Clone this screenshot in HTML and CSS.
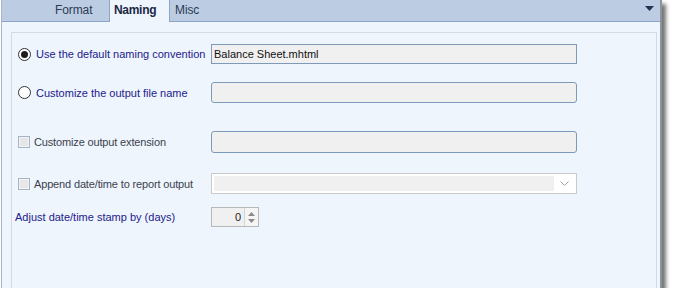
FILE: index.html
```html
<!DOCTYPE html>
<html>
<head>
	<title>Output Naming</title>
	<meta charset="utf-8">
	<link rel="stylesheet" href="styles.css">
</head>
<body>

	<div class="window">
		<div class="tabbar">
			<div class="tab">Format</div>
			<div class="tab tab-active">Naming</div>
			<div class="tab">Misc</div>
			<svg class="tab-menu" width="9" height="5" viewBox="0 0 9 5"><path d="M0 0H9L4.5 5Z" fill="#1f3355"/></svg>
		</div>

		<div class="content">
			<div class="group">

				<div class="row row-1">
					<label class="field-label">
						<span class="radio radio-on"></span>
						<span class="text-link">Use the default naming convention</span>
					</label>
					<div class="textbox">Balance Sheet.mhtml</div>
				</div>

				<div class="row row-2">
					<label class="field-label">
						<span class="radio"></span>
						<span class="text-link">Customize the output file name</span>
					</label>
					<div class="textbox rounded"></div>
				</div>

				<div class="row row-3">
					<label class="field-label">
						<span class="check"></span>
						<span class="text-muted">Customize output extension</span>
					</label>
					<div class="textbox rounded tall"></div>
				</div>

				<div class="row row-4">
					<label class="field-label">
						<span class="check"></span>
						<span class="text-muted">Append date/time to report output</span>
					</label>
					<div class="combo">
						<div class="combo-value"></div>
						<svg class="combo-arrow" width="9" height="5" viewBox="0 0 9 5"><path d="M0.5 0.5L4.5 4.5L8.5 0.5" fill="none" stroke="#a3a3a3"/></svg>
					</div>
				</div>

				<div class="row row-5">
					<label class="field-label plain">
						<span class="text-link">Adjust date/time stamp by (days)</span>
					</label>
					<div class="spinner">
						<span class="spinner-value">0</span>
						<span class="spinner-buttons">
							<svg width="7" height="4" viewBox="0 0 7 4"><path d="M0 4H7L3.5 0Z" fill="#8a8a8a"/></svg>
							<svg width="7" height="4" viewBox="0 0 7 4"><path d="M0 0H7L3.5 4Z" fill="#8a8a8a"/></svg>
						</span>
					</div>
				</div>

			</div>
		</div>
	</div>

</body>
</html>
```

FILE: styles.css
```css
*,
*:before,
*:after {
	box-sizing: border-box;
}

body {
	margin: 0;
	background-color: #ffffff;
	font-family: "Liberation Sans", Arial, sans-serif;
	font-size: 11px;
}

.window {
	width: 661px;
	height: 288px;
	margin-left: 1px;
	display: flex;
	flex-direction: column;
	border-left: 1px solid #a8b6c8;
	border-right: 2px solid #8d939b;
	background-color: #eef5fd;
	box-shadow: 4px 4px 4px rgba(0, 0, 0, 0.55);
}

/* Tabs */
.tabbar {
	position: relative;
	height: 22px;
	display: flex;
	align-items: stretch;
	padding-left: 53px;
	background-color: #bccde3;
	border-bottom: 1px solid #8ea6c6;
}

.tab {
	display: flex;
	align-items: center;
	width: 54px;
	padding-bottom: 1px;
	color: #2b3a55;
	font-size: 12px;
	letter-spacing: -0.1px;
}

.tab-active {
	width: 61px;
	margin-bottom: -1px;
	padding: 0 0 2px 4px;
	background-color: #eef5fd;
	border-left: 1px solid #8ea6c6;
	border-right: 1px solid #8ea6c6;
	color: #1b2845;
	font-weight: bold;
	letter-spacing: -0.3px;
}

.tab-active + .tab {
	width: 40px;
	padding-left: 5px;
}

.tab-menu {
	position: absolute;
	right: 6px;
	top: 6px;
}

/* Group */
.content {
	flex: 1;
	display: flex;
	padding: 10px 3px 0 9px;
}

.group {
	flex: 1;
	border: 1px solid #d3dae3;
	border-bottom: none;
	padding: 11px 0 0 6px;
}

.row {
	display: flex;
	align-items: center;
}

.row-1 { height: 20px; }
.row-2 { height: 21px; margin-top: 18px; }
.row-3 { height: 22px; margin-top: 28px; }
.row-4 { height: 21px; margin-top: 20px; }
.row-5 { height: 20px; margin-top: 13px; }

.field-label {
	width: 193px;
	display: flex;
	align-items: center;
	gap: 5px;
	white-space: nowrap;
}

.field-label.plain {
	margin-left: -3px;
	width: 196px;
}

.text-link {
	color: #23208c;
}

.text-muted {
	color: #3d3f4e;
	letter-spacing: -0.15px;
}

.radio {
	width: 13px;
	height: 13px;
	flex: none;
	border-radius: 50%;
	border: 1px solid #333333;
	background-color: #ffffff;
	position: relative;
}

.radio-on:after {
	content: "";
	position: absolute;
	left: 2px;
	top: 2px;
	width: 7px;
	height: 7px;
	border-radius: 50%;
	background-color: #1e1e1e;
}

.check {
	width: 12px;
	height: 12px;
	flex: none;
	margin-right: -1px;
	border: 1px solid #a6b4c8;
	background-color: #e6e6e6;
	box-shadow: inset 0 0 0 1px #f4f4f4;
}

/* Inputs */
.textbox {
	width: 366px;
	height: 100%;
	padding: 2px 2px;
	display: flex;
	align-items: center;
	background-color: #f0f0f0;
	border: 1px solid #7e9aba;
	color: #111111;
	font-size: 11px;
}

.textbox.rounded {
	border-radius: 3px;
}

.combo {
	width: 366px;
	height: 100%;
	display: flex;
	align-items: center;
	padding: 2px;
	background-color: #ffffff;
	border: 1px solid #cacaca;
}

.combo-value {
	flex: 1;
	height: 100%;
	background-color: #f0f0f0;
	margin-right: 6px;
}

.combo-arrow {
	margin-right: 5px;
}

.spinner {
	width: 48px;
	height: 100%;
	display: flex;
	align-items: center;
	background-color: #f0f0f0;
	border: 1px solid #b8b8b8;
}

.spinner-value {
	flex: 1;
	text-align: right;
	padding-right: 3px;
	color: #222222;
	font-size: 11px;
}

.spinner-buttons {
	width: 14px;
	height: 100%;
	display: flex;
	flex-direction: column;
	align-items: center;
	justify-content: space-around;
	padding: 2px 0;
	border-left: 1px solid #d4d4d4;
	background-color: #f5f5f5;
}

.spinner-buttons svg {
	display: block;
}
```
